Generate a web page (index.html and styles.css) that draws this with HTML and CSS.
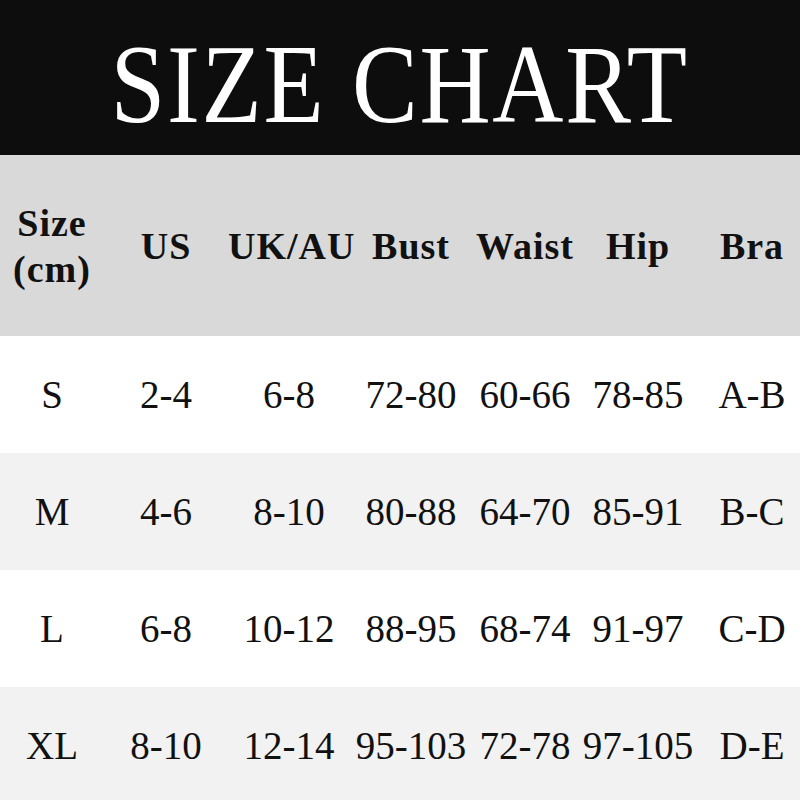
FILE: index.html
```html
<!DOCTYPE html>
<html lang="en">
<head>
<meta charset="utf-8">
<title>Size Chart</title>
<link rel="stylesheet" href="styles.css">
</head>
<body>
<div class="page">
  <header class="banner"><h1 class="title">SIZE CHART</h1></header>
  <div class="row head">
    <div class="cell first">Size<br>(cm)</div>
    <div class="cell">US</div>
    <div class="cell">UK/AU</div>
    <div class="cell">Bust</div>
    <div class="cell">Waist</div>
    <div class="cell">Hip</div>
    <div class="cell last">Bra</div>
  </div>
  <div class="row">
    <div class="cell">S</div><div class="cell">2-4</div><div class="cell">6-8</div><div class="cell">72-80</div><div class="cell">60-66</div><div class="cell">78-85</div><div class="cell last">A-B</div>
  </div>
  <div class="row alt">
    <div class="cell">M</div><div class="cell">4-6</div><div class="cell">8-10</div><div class="cell">80-88</div><div class="cell">64-70</div><div class="cell">85-91</div><div class="cell last">B-C</div>
  </div>
  <div class="row">
    <div class="cell">L</div><div class="cell">6-8</div><div class="cell">10-12</div><div class="cell">88-95</div><div class="cell">68-74</div><div class="cell">91-97</div><div class="cell last">C-D</div>
  </div>
  <div class="row alt">
    <div class="cell">XL</div><div class="cell">8-10</div><div class="cell">12-14</div><div class="cell">95-103</div><div class="cell">72-78</div><div class="cell">97-105</div><div class="cell last">D-E</div>
  </div>
</div>
</body>
</html>
```
FILE: styles.css
```css
html, body {
  margin: 0;
  padding: 0;
  background: #ffffff;
}
.page {
  width: 800px;
  height: 800px;
  overflow: hidden;
  font-family: "Liberation Serif", "Times New Roman", serif;
  color: #111111;
}
.banner {
  height: 155px;
  background: #0d0d0d;
  display: flex;
  align-items: center;
  justify-content: center;
}
.title {
  margin: 12px 0 0 0;
  color: #ffffff;
  font-weight: normal;
  font-size: 112px;
  line-height: 1;
  letter-spacing: 2px;
  transform: scaleX(0.88);
  white-space: nowrap;
}
.row {
  display: grid;
  grid-template-columns: 104px 124px 122px 122px 106px 120px 102px;
  height: 117px;
  align-items: center;
  font-size: 39px;
}
.row.alt {
  background: #f2f2f2;
}
.row.head {
  height: 181px;
  background: #d9d9d9;
  font-size: 38px;
  font-weight: bold;
  letter-spacing: 1px;
}
.cell {
  text-align: center;
  white-space: nowrap;
  line-height: 46px;
}
.cell.last {
  padding-left: 6px;
}
```
